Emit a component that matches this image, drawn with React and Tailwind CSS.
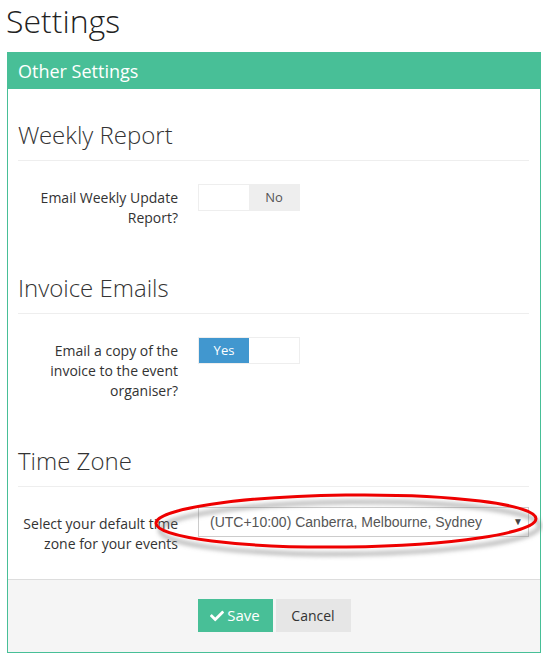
import { FaCheck } from 'react-icons/fa';

const GREEN = 'bg-[#48bf97]';
const LIGHT = "font-['Open_Sans_Light','Open_Sans',sans-serif] font-light";

function SectionHeading({ children, first }) {
  return (
    <div
      className={`${first ? 'mt-[33px]' : 'mt-[47px]'} ${LIGHT} border-b border-[#eeeeee] pb-[12px] text-[24px] leading-[26px] text-[#333]`}
    >
      {children}
    </div>
  );
}

function Row({ label, children, labelPad = 'pt-[4px]', rowGap = 'mt-[23px]' }) {
  return (
    <div className={`${rowGap} grid grid-cols-[160px_1fr] gap-x-[20px]`}>
      <label className={`${labelPad} text-right text-[14px] leading-[20px] text-[#333]`}>{label}</label>
      <div>{children}</div>
    </div>
  );
}

function Toggle({ on }) {
  return (
    <div className="flex h-[27px] w-[102px] border border-[#eeeeee] text-[13px] leading-[25px]">
      {on ? (
        <>
          <span className="w-[50px] bg-[#4197cf] text-center text-white">Yes</span>
          <span className="flex-1 bg-white" />
        </>
      ) : (
        <>
          <span className="w-[50px] bg-white" />
          <span className="flex-1 bg-[#eeeeee] text-center text-[#555]">No</span>
        </>
      )}
    </div>
  );
}

export default function App() {
  return (
    <div className="relative h-[660px] w-[543px] overflow-hidden bg-white font-['Open_Sans',sans-serif]">
      <h1 className={`${LIGHT} mb-[10px] pl-[6px] text-[32px] leading-[42px] text-[#222]`}>Settings</h1>

      <div className="ml-[7px] w-[534px] border border-[#48bf97]">
        <div className={`${GREEN} py-[6px] pl-[10px] text-[18px] leading-[24px] text-white`}>Other Settings</div>

        <div className="pb-[25px] pl-[10px] pr-[11px]">
          <SectionHeading first>Weekly Report</SectionHeading>
          <Row label="Email Weekly Update Report?">
            <Toggle on={false} />
          </Row>

          <SectionHeading>Invoice Emails</SectionHeading>
          <Row label="Email a copy of the invoice to the event organiser?">
            <Toggle on />
          </Row>

          <SectionHeading>Time Zone</SectionHeading>
          <Row label="Select your default time zone for your events" labelPad="pt-[7px]" rowGap="mt-[20px]">
            <div className="relative flex h-[30px] items-center border border-[#cccccc] bg-white pl-[11px] font-['Liberation_Sans',Arial,sans-serif] text-[14px] text-[#555]">
              (UTC+10:00) Canberra, Melbourne, Sydney
              <span className="absolute right-[5px] top-[9px] text-[10px] leading-none text-[#444]">▼</span>
            </div>
          </Row>
        </div>

        <div className="flex justify-center gap-[3px] border-t border-[#dddddd] bg-[#f5f5f5] pb-[20px] pt-[19px]">
          <button className={`${GREEN} flex h-[33px] w-[75px] items-center justify-center gap-[3px] text-[15px] text-white`}>
            <FaCheck className="h-[14px] w-[14px]" /> Save
          </button>
          <button className="h-[33px] w-[75px] bg-[#e6e6e6] text-[14px] text-[#333]">Cancel</button>
        </div>
      </div>

      {/* red annotation ring drawn over the time zone select */}
      <svg className="pointer-events-none absolute left-0 top-0" width="543" height="660">
        <defs>
          <filter id="soft" x="-10%" y="-50%" width="120%" height="200%">
            <feGaussianBlur stdDeviation="2" />
          </filter>
        </defs>
        <ellipse cx="350" cy="528" rx="190" ry="26" fill="none" stroke="#777" strokeOpacity="0.55" strokeWidth="4" filter="url(#soft)" transform="rotate(-0.7 350 528)" />
        <ellipse cx="346" cy="521" rx="190" ry="26" fill="none" stroke="#ee0000" strokeWidth="3" transform="rotate(-0.7 346 521)" />
      </svg>
    </div>
  );
}
